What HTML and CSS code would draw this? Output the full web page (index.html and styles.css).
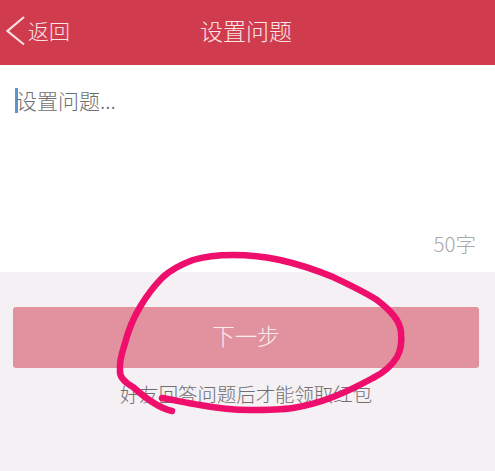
FILE: index.html
```html
<!DOCTYPE html>
<html lang="zh">
<head>
<meta charset="utf-8">
<title>设置问题</title>
<link rel="stylesheet" href="styles.css">
</head>
<body>
<div class="page">
  <header class="header">
    <div class="back">
      <svg class="chev" viewBox="0 0 20 32" width="20" height="32"><path d="M18 2 L1.500 16 L18 29.500" fill="none" stroke="#f7dfe2" stroke-width="2.200"/></svg>
      <span class="back-label">返回</span>
    </div>
    <div class="title">设置问题</div>
  </header>
  <section class="editor">
    <div class="input"><span class="caret"></span><span class="placeholder">设置问题...</span></div>
    <div class="count">50字</div>
  </section>
  <section class="actions">
    <div class="btn">下一步</div>
    <p class="hint">好友回答问题后才能领取红包</p>
  </section>
  <svg class="scribble" viewBox="0 0 495 471" width="495" height="471">
    <path d="M172 411 C158 408 143 396 133 387 C124 382 119 377 120 370 C119 360 123 350 125 343 C129 328 134 317 140 307 C147 295 155 285 163 277 C172 269 182 264 193 260 C206 256 219 255 233 255 C250 255 266 257 280 260 C298 264 316 270 333 277 C350 285 365 292 377 300 C390 310 400 320 401 332 C402 342 401 350 397 357 C391 367 383 373 373 378 C360 385 346 392 333 397 C320 402 306 406 293 408 C279 410 264 410 250 410 C232 410 216 408 200 405 C187 403 174 400 162 398" fill="none" stroke="#ee0f6c" stroke-width="6.500" stroke-linecap="round" stroke-linejoin="round"/>
  </svg>
</div>
</body>
</html>
```
FILE: styles.css
```css
html, body {
  margin: 0;
  padding: 0;
}
body {
  font-family: "Noto Sans CJK SC", "Noto Sans", sans-serif;
  font-weight: 300;
  background: #f4f0f3;
}
.page {
  position: relative;
  width: 495px;
  height: 471px;
  overflow: hidden;
  display: flex;
  flex-direction: column;
}
.header {
  position: relative;
  box-sizing: border-box;
  height: 65px;
  padding-bottom: 6px;
  background: #d03c4e;
  display: flex;
  align-items: center;
  justify-content: center;
  color: #f9e4e6;
  flex: none;
}
.back {
  position: absolute;
  left: 6px;
  top: 14px;
  display: flex;
  align-items: center;
  gap: 2px;
  font-size: 21px;
  line-height: 32px;
}
.back-label {
  padding-bottom: 2px;
}
.chev {
  display: block;
}
.title {
  font-size: 23px;
  line-height: 32px;
  margin-right: 3px;
}
.editor {
  height: 207px;
  background: #ffffff;
  padding: 20px 19px 14px 15px;
  flex: none;
  display: flex;
  flex-direction: column;
  justify-content: space-between;
  box-sizing: border-box;
}
.input {
  display: flex;
  align-items: center;
  height: 30px;
  color: #6f6f71;
  font-size: 21px;
}
.caret {
  width: 3px;
  height: 25px;
  background: #5d94d0;
  flex: none;
  margin-right: -2px;
}
.count {
  text-align: right;
  font-size: 20.500px;
  line-height: 30px;
  color: #a8a8a8;
}
.actions {
  flex: 1;
  padding: 35px 16px 0 13px;
}
.btn {
  box-sizing: border-box;
  height: 61px;
  padding-bottom: 6px;
  background: #e2929f;
  border-radius: 3px;
  color: #f9ecee;
  font-size: 22.500px;
  display: flex;
  align-items: center;
  justify-content: center;
}
.hint {
  margin: 11px 0 0;
  text-align: center;
  font-size: 19.400px;
  line-height: 30px;
  color: #716e72;
}
.scribble {
  position: absolute;
  left: 0;
  top: 0;
  pointer-events: none;
}
```
